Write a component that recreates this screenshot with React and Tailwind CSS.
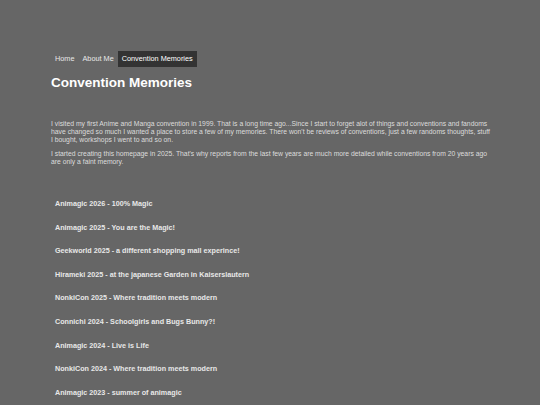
const conventions = [
  "Animagic 2026 - 100% Magic",
  "Animagic 2025 - You are the Magic!",
  "Geekworld 2025 - a different shopping mall experince!",
  "Hirameki 2025 - at the japanese Garden in Kaiserslautern",
  "NonkiCon 2025 - Where tradition meets modern",
  "Connichi 2024 - Schoolgirls and Bugs Bunny?!",
  "Animagic 2024 - Live is Life",
  "NonkiCon 2024 - Where tradition meets modern",
  "Animagic 2023 - summer of animagic",
];

const App = () => {
  return (
    <div className="min-h-[405px] bg-[#666666] font-['Liberation_Sans',Arial,sans-serif] text-[#e6e6e6]">
      <div className="w-[446px] ml-[51px] pt-[51px]">

        {/* NAV */}

        <nav className="flex text-[7.3px] leading-[16px]">
          <a className="px-1 h-4 text-[#e8e8e8]">Home</a>
          <a className="px-1 h-4 text-[#e8e8e8]">About Me</a>
          <a className="px-1 h-4 bg-[#333333] text-white">Convention Memories</a>
        </nav>

        <h1 className="text-[13.5px] font-bold text-white mt-[7px] leading-[18px]">
          Convention Memories
        </h1>

        {/* INTRO */}

        <div className="mt-[28px] text-[6.8px] leading-[8px] text-[#dcdcdc]">
          <p>
            I visited my first Anime and Manga convention in 1999. That is a long time ago...Since I start to forget alot of things and conventions and fandoms<br />
            have changed so much I wanted a place to store a few of my memories. There won't be reviews of conventions, just a few randoms thoughts, stuff<br />
            I bought, workshops I went to and so on.
          </p>
          <p className="mt-[6px]">
            I started creating this homepage in 2025. That's why reports from the last few years are much more detailed while conventions from 20 years ago<br />
            are only a faint memory.
          </p>
        </div>

        {/* LIST */}

        <ul className="mt-[33px]">
          {conventions.map((c) => (
            <li key={c} className="h-[23.6px] px-1 text-[7.2px] font-bold leading-[10px] text-[#e8e8e8]">
              {c}
            </li>
          ))}
        </ul>

      </div>
    </div>
  );
};

export default App;
